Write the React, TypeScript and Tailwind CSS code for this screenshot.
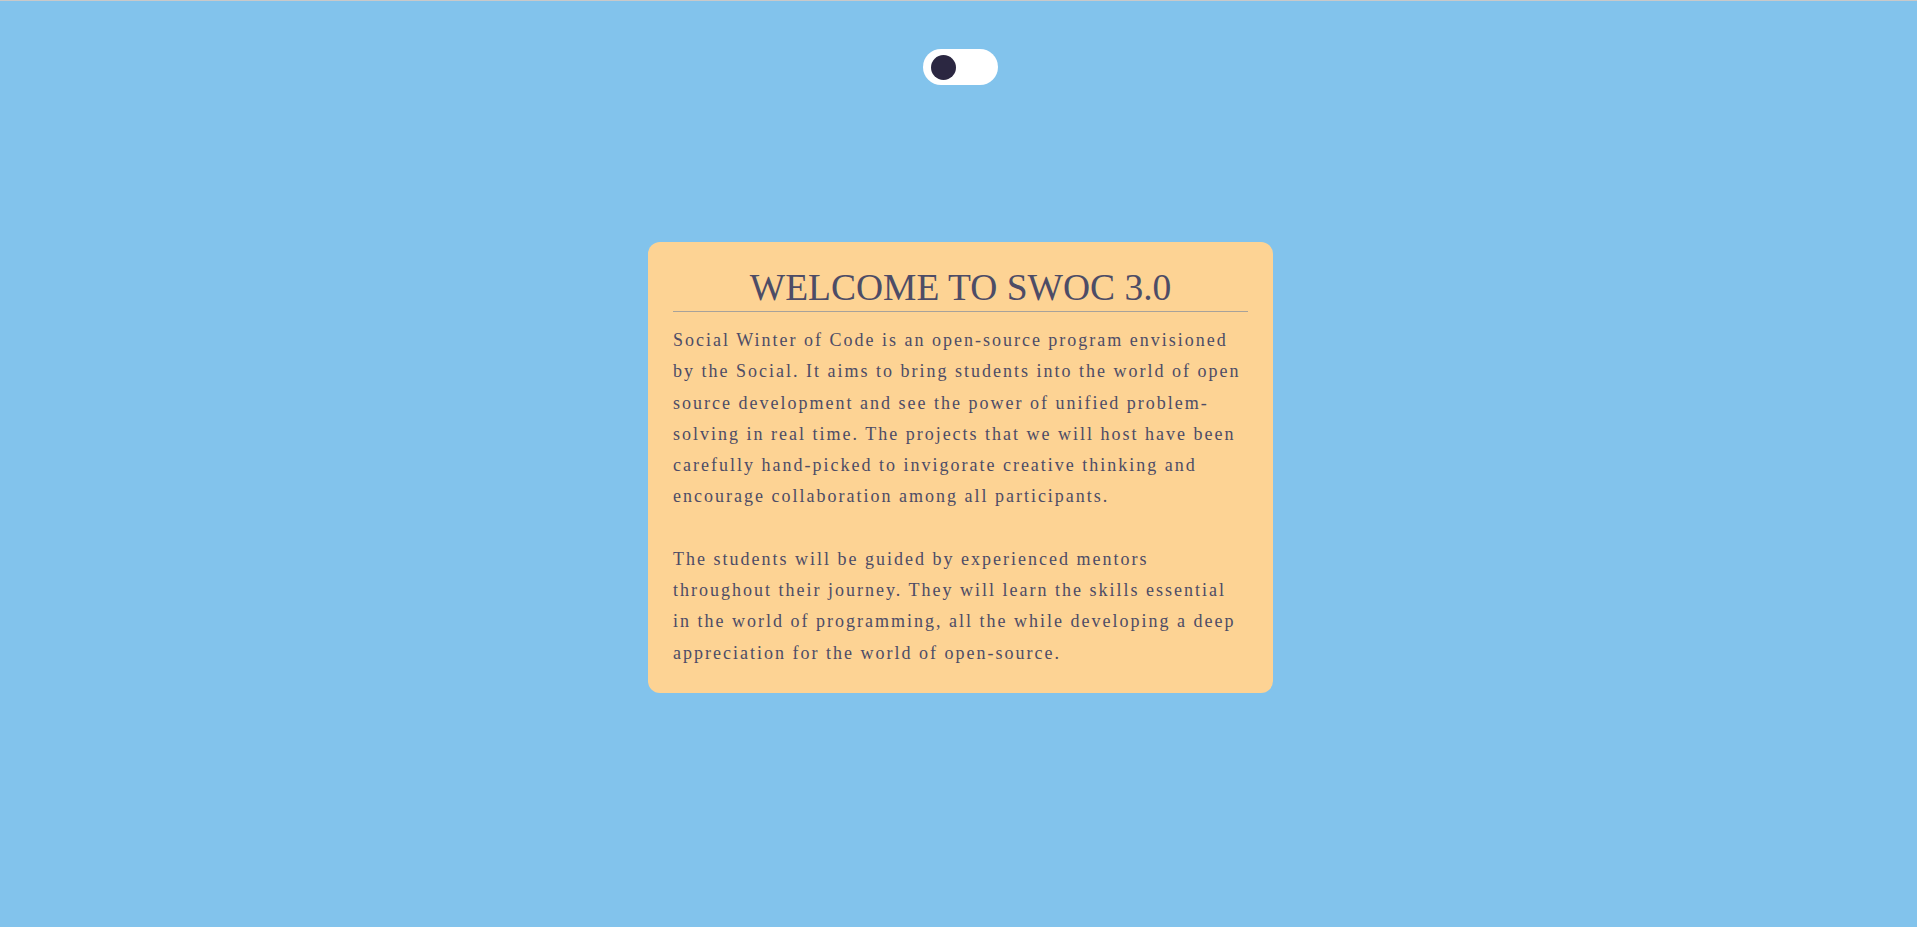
import { useState } from 'react';

const ABOUT_1 =
  'Social Winter of Code is an open-source program envisioned by the Social. It aims to bring students into the world of open source development and see the power of unified problem-solving in real time. The projects that we will host have been carefully hand-picked to invigorate creative thinking and encourage collaboration among all participants.';
const ABOUT_2 =
  'The students will be guided by experienced mentors throughout their journey. They will learn the skills essential in the world of programming, all the while developing a deep appreciation for the world of open-source.';

export default function App() {
  const [dark, setDark] = useState(false);

  return (
    <div
      className="min-h-[927px] w-full bg-[#82c3ec] border-t border-[#c9c9c9] flex flex-col items-center"
      style={{ fontFamily: '"Liberation Serif", "Times New Roman", serif' }}
    >
      {/* toggle */}
      <button
        onClick={() => setDark(d => !d)}
        className="mt-[48px] ml-[4px] w-[75px] h-[36px] rounded-full bg-white flex items-center px-[8px]"
      >
        <span
          className={`block w-[25px] h-[25px] rounded-full bg-[#2b2741] transition-transform ${
            dark ? 'translate-x-[34px]' : ''
          }`}
        />
      </button>

      {/* carte */}
      <div className="mt-[157px] ml-[4px] w-[625px] bg-[#fdd394] rounded-[12px] px-[25px] pt-[24px] pb-[24px] text-[#4d4c66]">
        <h1 className="text-[37.5px] leading-[43px] text-center border-b border-[#a8a29a] pb-[2px]">
          WELCOME TO SWOC 3.0
        </h1>
        <p className="mt-[13px] text-[18px] leading-[31.25px] tracking-[2px]">
          {ABOUT_1}
          <br />
          <br />
          {ABOUT_2}
        </p>
      </div>
    </div>
  );
}
